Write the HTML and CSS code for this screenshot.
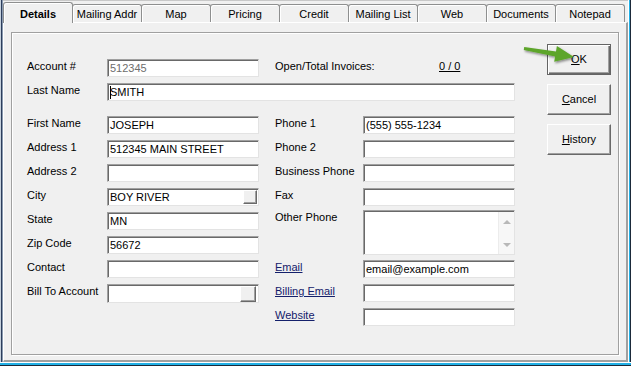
FILE: index.html
```html
<!DOCTYPE html>
<html>
<head>
<meta charset="utf-8">
<link rel="stylesheet" href="styles.css">
</head>
<body>
<div class="window">
  <div class="tabs">
    <div class="tab active">Details</div>
    <div class="tab">Mailing Addr</div>
    <div class="tab">Map</div>
    <div class="tab">Pricing</div>
    <div class="tab">Credit</div>
    <div class="tab">Mailing List</div>
    <div class="tab">Web</div>
    <div class="tab">Documents</div>
    <div class="tab">Notepad</div>
  </div>
  <div class="panel">
    <div class="group">
      <div class="form">
        <div class="row">
          <span class="lbl">Account #</span>
          <div class="input disabled">512345</div>
          <span class="lbl inv-lbl">Open/Total Invoices:</span>
          <span class="inv">0 / 0</span>
        </div>
        <div class="row">
          <span class="lbl">Last Name</span>
          <div class="input wide"><span class="caret"></span>SMITH</div>
        </div>
        <div class="cols">
          <div class="col">
            <div class="row"><span class="lbl">First Name</span><div class="input">JOSEPH</div></div>
            <div class="row"><span class="lbl">Address 1</span><div class="input">512345 MAIN STREET</div></div>
            <div class="row"><span class="lbl">Address 2</span><div class="input"></div></div>
            <div class="row"><span class="lbl">City</span><div class="input combo"><span class="val">BOY RIVER</span><span class="dd"></span></div></div>
            <div class="row"><span class="lbl">State</span><div class="input">MN</div></div>
            <div class="row"><span class="lbl">Zip Code</span><div class="input">56672</div></div>
            <div class="row"><span class="lbl">Contact</span><div class="input"></div></div>
            <div class="row tall"><span class="lbl">Bill To Account</span><div class="input combo big"><span class="val"></span><span class="dd"></span></div></div>
          </div>
          <div class="col">
            <div class="row"><span class="lbl r">Phone 1</span><div class="input">(555) 555-1234</div></div>
            <div class="row"><span class="lbl r">Phone 2</span><div class="input"></div></div>
            <div class="row"><span class="lbl r">Business Phone</span><div class="input"></div></div>
            <div class="row"><span class="lbl r">Fax</span><div class="input"></div></div>
            <div class="row memo-row"><span class="lbl r">Other Phone</span>
              <div class="input memo"><span class="val"></span><span class="scroll"><span class="up"></span><span class="down"></span></span></div>
            </div>
            <div class="row email-row"><span class="lbl r"><span class="link">Email</span></span><div class="input">email@example.com</div></div>
            <div class="row"><span class="lbl r"><span class="link">Billing Email</span></span><div class="input"></div></div>
            <div class="row"><span class="lbl r"><span class="link">Website</span></span><div class="input"></div></div>
          </div>
        </div>
      </div>
      <div class="buttons">
        <div class="btn default"><span><u>O</u>K</span></div>
        <div class="btn"><span><u>C</u>ancel</span></div>
        <div class="btn"><span><u>H</u>istory</span></div>
      </div>
    </div>
  </div>
  <svg class="arrow" width="64" height="32" viewBox="0 0 64 32">
    <defs>
      <filter id="sh" x="-20%" y="-40%" width="140%" height="180%">
        <feDropShadow dx="1" dy="1.5" stdDeviation="1" flood-color="#000" flood-opacity="0.45"/>
      </filter>
    </defs>
    <polygon filter="url(#sh)" fill="#5da52c" points="6.2,7 38,11.4 38.9,6 56,17 36.2,21.8 37.1,16.4 5.8,10"/>
  </svg>
</div>
</body>
</html>
```

FILE: styles.css
```css
* { box-sizing: border-box; }
html, body { margin: 0; padding: 0; }
body {
  width: 631px;
  height: 366px;
  overflow: hidden;
  background: #f0f0f0;
  font: 11px "Liberation Sans", Arial, sans-serif;
  color: #000;
}
.window {
  position: relative;
  width: 631px;
  height: 366px;
  padding: 2px 3px 4px 3px;
  display: flex;
  flex-direction: column;
  background: #f0f0f0;
  box-shadow:
    inset 0 -1px 0 #1b2a3a,
    inset 0 -3px 0 #22b0e6,
    inset 0 -4px 0 #ffffff,
    inset -1px 0 0 #1b2a3a,
    inset -2px 0 0 #22b0e6,
    inset -3px 0 0 #ffffff,
    inset 1px 0 0 #c5d0dc,
    inset 2px 0 0 #2c3d5c,
    inset 3px 0 0 #8a9ab0,
    inset 0 1px 0 #c8c8c8;
}
.tabs {
  display: flex;
  height: 20px;
  position: relative;
  z-index: 1;
  flex: none;
}
.tab {
  width: 70px;
  height: 18px;
  margin-top: 2px;
  margin-right: -1px;
  border: 1px solid #8e8f8f;
  border-bottom: none;
  border-radius: 3px 3px 0 0;
  padding-top: 3px;
  text-align: center;
  line-height: 13px;
  background: #f0f0f0;
  box-shadow: inset 1px 1px 0 #ffffff;
  white-space: nowrap;
  flex: none;
}
.tab.active {
  height: 21px;
  margin-top: 0;
  padding-top: 5px;
  font-weight: bold;
  position: relative;
  z-index: 2;
}
.panel {
  height: 340px;
  flex: none;
  border-style: solid;
  border-width: 1px 2px 2px 1px;
  border-color: #ffffff #a0a0a0 #a0a0a0 #ffffff;
  padding: 9px 7px 0 7px;
}
.group {
  width: 608px;
  height: 323px;
  border: 1px solid #a0a0a0;
  box-shadow: inset 1px 1px 0 #ffffff, 1px 1px 0 #ffffff;
  display: flex;
  padding: 0 0 0 15px;
}
.form {
  width: 488px;
  flex: none;
  padding-top: 26px;
  display: flex;
  flex-direction: column;
}
.row {
  display: flex;
  align-items: flex-start;
  height: 18px;
  flex: none;
}
.row + .row { margin-top: 6px; }
.lbl {
  width: 80px;
  flex: none;
  line-height: 13px;
  padding-top: 1px;
  white-space: nowrap;
}
.lbl.r { width: 88px; }
.inv-lbl { width: 164px; margin-left: 16px; }
.inv {
  line-height: 13px;
  padding-top: 1px;
  text-decoration: underline;
}
.link {
  color: #14206b;
  text-decoration: underline;
}
.input {
  width: 152px;
  height: 18px;
  flex: none;
  border: 1px solid;
  border-color: #a0a0a0 #e3e3e3 #e3e3e3 #a0a0a0;
  box-shadow: inset 1px 1px 0 #696969;
  background: #ffffff;
  padding: 1px 2px 0 2px;
  line-height: 14px;
  white-space: nowrap;
  overflow: hidden;
}
.input.wide { width: 408px; }
.input.disabled { color: #6d6d6d; }
.caret {
  display: inline-block;
  width: 1px;
  height: 13px;
  background: #000;
  vertical-align: -3px;
  margin-right: -1px;
}
.cols {
  display: flex;
  gap: 16px;
  margin-top: 15px;
}
.col {
  display: flex;
  flex-direction: column;
}
.row.tall { height: 19px; }
.input.combo {
  display: flex;
  justify-content: space-between;
  padding: 1px 0 0 2px;
}
.input.combo.big { height: 19px; padding: 1px 1px 0 2px; }
.dd {
  width: 14px;
  height: 14px;
  margin-right: 1px;
  flex: none;
  background: #f0f0f0;
  border: 1px solid;
  border-color: #ffffff #696969 #696969 #ffffff;
  box-shadow: inset -1px -1px 0 #a0a0a0;
}
.big .dd { width: 16px; height: 16px; margin-right: 1px; }
.row.memo-row { height: 45px; margin-top: 4px; }
.row.email-row { margin-top: 5px; }
.input.memo {
  height: 45px;
  display: flex;
  justify-content: space-between;
  padding: 1px 0 0 2px;
}
.scroll {
  width: 16px;
  height: 42px;
  flex: none;
  background: #f7f7f7;
  border-left: 1px solid #ececec;
  display: flex;
  flex-direction: column;
  align-items: center;
  justify-content: space-between;
  padding: 8px 0 7px 0;
}
.up, .down {
  width: 0;
  height: 0;
  border-left: 4px solid transparent;
  border-right: 4px solid transparent;
}
.up { border-bottom: 4px solid #b8b8b8; }
.down { border-top: 4px solid #b8b8b8; }
.buttons {
  margin-left: 32px;
  padding-top: 11px;
  display: flex;
  flex-direction: column;
  gap: 9px;
  flex: none;
}
.btn {
  width: 64px;
  height: 31px;
  display: flex;
  align-items: center;
  justify-content: center;
  background: #f0f0f0;
  border: 1px solid;
  border-color: #ffffff #696969 #696969 #ffffff;
  box-shadow: inset -1px -1px 0 #a0a0a0;
  line-height: 13px;
}
.btn.default {
  border-color: #646464;
  box-shadow: inset 1px 1px 0 #ffffff, inset -1px -1px 0 #696969, inset -2px -2px 0 #a0a0a0;
}
.arrow {
  position: absolute;
  left: 518px;
  top: 40px;
}
```
